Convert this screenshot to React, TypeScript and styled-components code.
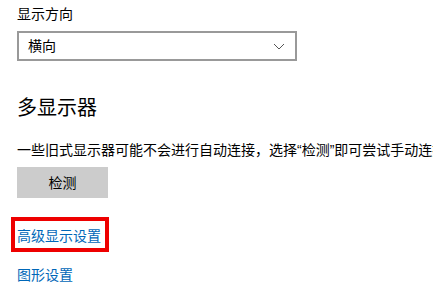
import styled, { createGlobalStyle } from 'styled-components'

const GlobalStyle = createGlobalStyle`
    html, body {
        margin: 0;
        padding: 0;
        background: #ffffff;
        overflow: hidden;
    }
    body {
        font-family: "Liberation Sans", "Noto Sans CJK SC", sans-serif;
        color: #000000;
    }
`

const Page = styled.div`
    width: 433px;
    height: 284px;
    padding: 4px 0 0 17px;
    box-sizing: border-box;
    overflow: hidden;
`

const FieldLabel = styled.div`
    font-size: 14px;
    line-height: 20px;
`

const Select = styled.div`
    margin-top: 7px;
    width: 280px;
    height: 30px;
    box-sizing: border-box;
    border: 2px solid #999999;
    display: flex;
    align-items: center;
    justify-content: space-between;
    padding: 0 10px 0 9px;
    font-size: 14px;
    line-height: 20px;

    svg {
        display: block;
    }
`

const Heading = styled.h2`
    margin: 33px 0 0;
    font-size: 20px;
    line-height: 28px;
    font-weight: 400;
`

const Description = styled.p`
    margin: 18px 0 0;
    font-size: 14px;
    line-height: 20px;
    white-space: nowrap;
`

const Button = styled.button`
    margin-top: 7px;
    width: 91px;
    height: 31px;
    border: none;
    background: #cccccc;
    font-family: inherit;
    font-size: 14px;
    color: #000000;
    padding: 0 0 2px;
    display: block;
`

const Link = styled.a<{ $highlighted?: boolean }>`
    display: block;
    width: fit-content;
    color: #0067b8;
    font-size: 14px;
    line-height: 20px;
    text-decoration: none;
    cursor: pointer;
    box-sizing: border-box;
    margin-top: ${(p) => (p.$highlighted ? '19px' : '13px')};
    margin-left: ${(p) => (p.$highlighted ? '-6px' : '0')};
    padding: ${(p) => (p.$highlighted ? '5px 4px 2px 2px' : '0')};
    border: ${(p) => (p.$highlighted ? '4px solid #ee0000' : 'none')};
`

const Chevron = () => (
    <svg width="12" height="7" viewBox="0 0 12 7" fill="none">
        <path d="M1 1 L6 6 L11 1" stroke="#555555" strokeWidth="1" />
    </svg>
)

export default function App() {
    return (
        <>
            <GlobalStyle />
            <Page>
                <FieldLabel>显示方向</FieldLabel>
                <Select>
                    <span>横向</span>
                    <Chevron />
                </Select>

                <Heading>多显示器</Heading>
                <Description>一些旧式显示器可能不会进行自动连接，选择“检测”即可尝试手动连接。</Description>
                <Button>检测</Button>

                <Link $highlighted>高级显示设置</Link>
                <Link>图形设置</Link>
            </Page>
        </>
    )
}
